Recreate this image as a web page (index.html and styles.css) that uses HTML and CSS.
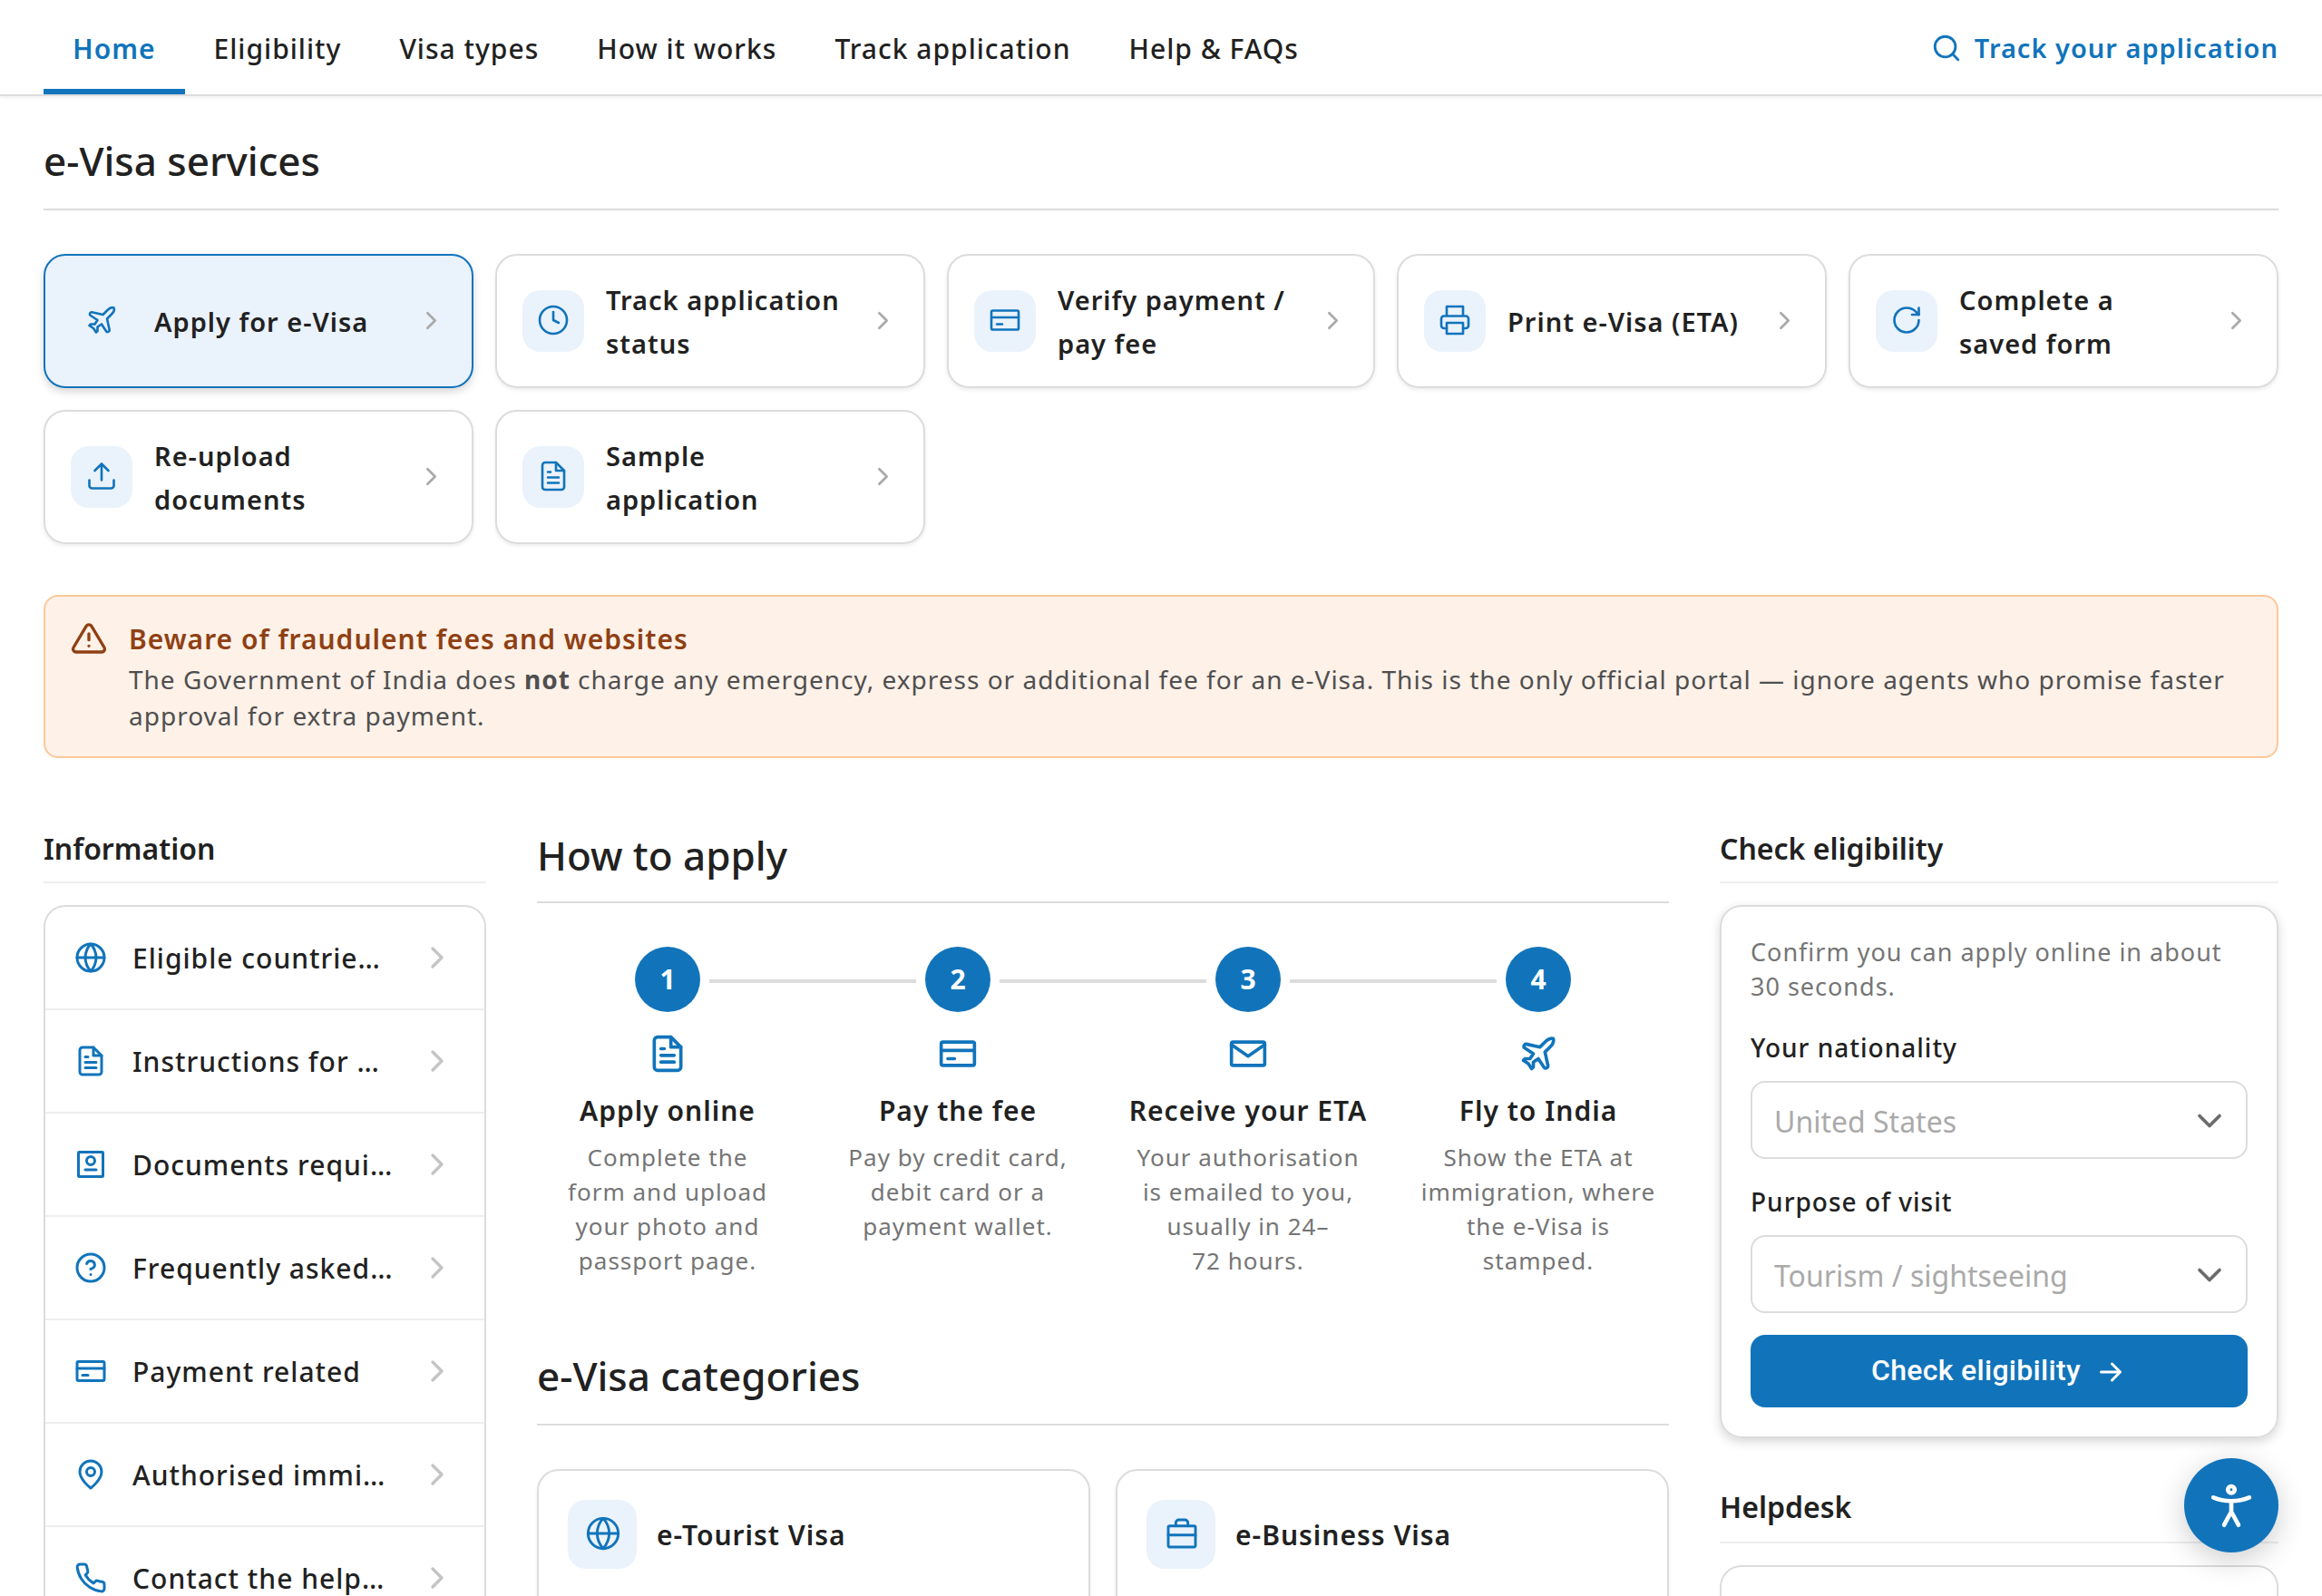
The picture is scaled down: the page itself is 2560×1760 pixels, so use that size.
FILE: index.html
```html
<!DOCTYPE html>
<html lang="en">
<head>
<meta charset="utf-8">
<title>e-Visa services</title>
<link rel="stylesheet" href="styles.css">
</head>
<body>
<svg class="sprite" xmlns="http://www.w3.org/2000/svg">
  <symbol id="plane" viewBox="0 0 24 24"><path d="M17.8 19.2 16 11l3.5-3.5C21 6 21.5 4 21 3c-1-.5-3 0-4.5 1.5L13 8 4.8 6.2c-.5-.1-.9.1-1.1.5l-.3.5c-.2.5-.1 1 .3 1.3L9 12l-2 3H4l-1 1 3 2 2 3 1-1v-3l3-2 3.5 5.3c.3.4.8.5 1.3.3l.5-.2c.4-.3.6-.7.5-1.2z"/></symbol>
  <symbol id="clock" viewBox="0 0 24 24"><circle cx="12" cy="12" r="10"/><path d="M12 6v6l4 2"/></symbol>
  <symbol id="card" viewBox="0 0 24 24"><rect x="2" y="5" width="20" height="14" rx="1"/><path d="M2 10h20M6 15h4"/></symbol>
  <symbol id="printer" viewBox="0 0 24 24"><path d="M6 9V2h12v7M6 18H4a2 2 0 0 1-2-2v-5a2 2 0 0 1 2-2h16a2 2 0 0 1 2 2v5a2 2 0 0 1-2 2h-2"/><path d="M6 14h12v8H6z"/></symbol>
  <symbol id="refresh" viewBox="0 0 24 24"><path d="M21 12a9 9 0 1 1-9-9c2.52 0 4.93 1 6.74 2.74L21 8"/><path d="M21 3v5h-5"/></symbol>
  <symbol id="upload" viewBox="0 0 24 24"><path d="M21 15v4a2 2 0 0 1-2 2H5a2 2 0 0 1-2-2v-4M17 8l-5-5-5 5M12 3v12"/></symbol>
  <symbol id="file" viewBox="0 0 24 24"><path d="M14 2H6a2 2 0 0 0-2 2v16a2 2 0 0 0 2 2h12a2 2 0 0 0 2-2V8z"/><path d="M14 2v6h6M16 13H8M16 17H8M10 9H8"/></symbol>
  <symbol id="alert" viewBox="0 0 24 24"><path d="M10.29 3.86 1.82 18a2 2 0 0 0 1.71 3h16.94a2 2 0 0 0 1.71-3L13.71 3.86a2 2 0 0 0-3.42 0z"/><path d="M12 9v4M12 17h.01"/></symbol>
  <symbol id="globe" viewBox="0 0 24 24"><circle cx="12" cy="12" r="10"/><path d="M2 12h20M12 2a15.3 15.3 0 0 1 4 10 15.3 15.3 0 0 1-4 10 15.3 15.3 0 0 1-4-10 15.3 15.3 0 0 1 4-10z"/></symbol>
  <symbol id="idcard" viewBox="0 0 24 24"><rect x="3" y="3" width="18" height="18" rx=".5"/><circle cx="12" cy="9.3" r="3"/><path d="M8 16h8"/></symbol>
  <symbol id="help" viewBox="0 0 24 24"><circle cx="12" cy="12" r="10"/><path d="M9.09 9a3 3 0 0 1 5.83 1c0 2-3 3-3 3M12 17h.01"/></symbol>
  <symbol id="pin" viewBox="0 0 24 24"><path d="M20 10c0 6-8 12-8 12s-8-6-8-12a8 8 0 0 1 16 0z"/><circle cx="12" cy="10" r="3"/></symbol>
  <symbol id="phone" viewBox="0 0 24 24"><path d="M22 16.92v3a2 2 0 0 1-2.18 2 19.79 19.79 0 0 1-8.63-3.07 19.5 19.5 0 0 1-6-6 19.79 19.79 0 0 1-3.07-8.67A2 2 0 0 1 4.11 2h3a2 2 0 0 1 2 1.72c.13.96.36 1.9.7 2.81a2 2 0 0 1-.45 2.11L8.09 9.91a16 16 0 0 0 6 6l1.27-1.27a2 2 0 0 1 2.11-.45c.91.34 1.85.57 2.81.7A2 2 0 0 1 22 16.92z"/></symbol>
  <symbol id="mail" viewBox="0 0 24 24"><rect x="2" y="5" width="20" height="14" rx="1"/><path d="m2 6.5 10 7 10-7"/></symbol>
  <symbol id="briefcase" viewBox="0 0 24 24"><rect x="3" y="7" width="18" height="14" rx="1"/><path d="M8 7V5a2 2 0 0 1 2-2h4a2 2 0 0 1 2 2v2M3 13h18"/></symbol>
  <symbol id="search" viewBox="0 0 24 24"><circle cx="11" cy="11" r="8"/><path d="m21 21-4.35-4.35"/></symbol>
  <symbol id="chevron" viewBox="0 0 24 24"><path d="m9 6 6 6-6 6"/></symbol>
  <symbol id="down" viewBox="0 0 24 24"><path d="m6 9 6 6 6-6"/></symbol>
  <symbol id="arrow" viewBox="0 0 24 24"><path d="M5 12h14M13 6l6 6-6 6"/></symbol>
  <symbol id="access" viewBox="0 0 24 24"><circle cx="12" cy="4.6" r="1.6"/><path d="M3.5 8.3c5 2.2 12 2.2 17 0M12 10v5M12 15l-3.4 6.3M12 15l3.4 6.3"/></symbol>
</svg>

<header class="nav">
  <nav class="nav-links">
    <a class="nav-link active">Home</a>
    <a class="nav-link">Eligibility</a>
    <a class="nav-link">Visa types</a>
    <a class="nav-link">How it works</a>
    <a class="nav-link">Track application</a>
    <a class="nav-link">Help &amp; FAQs</a>
  </nav>
  <a class="track"><svg class="icon"><use href="#search"/></svg>Track your application</a>
</header>

<main class="page">
  <h2 class="title">e-Visa services</h2>
  <div class="services">
    <a class="service selected"><span class="tile"><svg class="icon"><use href="#plane"/></svg></span><span class="label">Apply for e-Visa</span><svg class="icon chev"><use href="#chevron"/></svg></a>
    <a class="service"><span class="tile"><svg class="icon"><use href="#clock"/></svg></span><span class="label">Track application status</span><svg class="icon chev"><use href="#chevron"/></svg></a>
    <a class="service"><span class="tile"><svg class="icon"><use href="#card"/></svg></span><span class="label">Verify payment / pay fee</span><svg class="icon chev"><use href="#chevron"/></svg></a>
    <a class="service"><span class="tile"><svg class="icon"><use href="#printer"/></svg></span><span class="label">Print e-Visa (ETA)</span><svg class="icon chev"><use href="#chevron"/></svg></a>
    <a class="service"><span class="tile"><svg class="icon"><use href="#refresh"/></svg></span><span class="label">Complete a<br>saved form</span><svg class="icon chev"><use href="#chevron"/></svg></a>
    <a class="service"><span class="tile"><svg class="icon"><use href="#upload"/></svg></span><span class="label">Re-upload documents</span><svg class="icon chev"><use href="#chevron"/></svg></a>
    <a class="service"><span class="tile"><svg class="icon"><use href="#file"/></svg></span><span class="label">Sample application</span><svg class="icon chev"><use href="#chevron"/></svg></a>
  </div>

  <section class="notice">
    <svg class="icon"><use href="#alert"/></svg>
    <div>
      <h3 class="notice-title">Beware of fraudulent fees and websites</h3>
      <p class="notice-text">The Government of India does <b>not</b> charge any emergency, express or additional fee for an e-Visa. This is the only official portal — ignore agents who promise faster approval for extra payment.</p>
    </div>
  </section>

  <div class="columns">
    <aside>
      <h3 class="side-title">Information</h3>
      <div class="menu">
        <a class="menu-row"><svg class="icon"><use href="#globe"/></svg><span class="menu-label">Eligible countries and territories</span><svg class="icon chev"><use href="#chevron"/></svg></a>
        <a class="menu-row"><svg class="icon"><use href="#file"/></svg><span class="menu-label">Instructions for applicants</span><svg class="icon chev"><use href="#chevron"/></svg></a>
        <a class="menu-row"><svg class="icon"><use href="#idcard"/></svg><span class="menu-label">Documents required</span><svg class="icon chev"><use href="#chevron"/></svg></a>
        <a class="menu-row"><svg class="icon"><use href="#help"/></svg><span class="menu-label">Frequently asked questions</span><svg class="icon chev"><use href="#chevron"/></svg></a>
        <a class="menu-row"><svg class="icon"><use href="#card"/></svg><span class="menu-label">Payment related</span><svg class="icon chev"><use href="#chevron"/></svg></a>
        <a class="menu-row"><svg class="icon"><use href="#pin"/></svg><span class="menu-label">Authorised immigration posts</span><svg class="icon chev"><use href="#chevron"/></svg></a>
        <a class="menu-row"><svg class="icon"><use href="#phone"/></svg><span class="menu-label">Contact the helpdesk</span><svg class="icon chev"><use href="#chevron"/></svg></a>
      </div>
    </aside>

    <section>
      <h2 class="title steps-heading">How to apply</h2>
      <div class="steps">
        <div class="step"><span class="num">1</span><svg class="icon"><use href="#file"/></svg><h4 class="step-title">Apply online</h4><p class="step-text">Complete the<br>form and upload<br>your photo and<br>passport page.</p></div>
        <div class="step"><span class="num">2</span><svg class="icon"><use href="#card"/></svg><h4 class="step-title">Pay the fee</h4><p class="step-text">Pay by credit card,<br>debit card or a<br>payment wallet.</p></div>
        <div class="step"><span class="num">3</span><svg class="icon"><use href="#mail"/></svg><h4 class="step-title">Receive your ETA</h4><p class="step-text">Your authorisation<br>is emailed to you,<br>usually in 24–<br>72 hours.</p></div>
        <div class="step"><span class="num">4</span><svg class="icon"><use href="#plane"/></svg><h4 class="step-title">Fly to India</h4><p class="step-text">Show the ETA at<br>immigration, where<br>the e-Visa is<br>stamped.</p></div>
      </div>
      <h2 class="title">e-Visa categories</h2>
      <div class="categories">
        <div class="category"><span class="tile"><svg class="icon"><use href="#globe"/></svg></span><h4 class="category-title">e-Tourist Visa</h4></div>
        <div class="category"><span class="tile"><svg class="icon"><use href="#briefcase"/></svg></span><h4 class="category-title">e-Business Visa</h4></div>
      </div>
    </section>

    <aside>
      <h3 class="side-title">Check eligibility</h3>
      <form class="check">
        <p class="check-text">Confirm you can apply online in about 30 seconds.</p>
        <label class="field-label">Your nationality</label>
        <div class="select">United States<svg class="icon"><use href="#down"/></svg></div>
        <label class="field-label">Purpose of visit</label>
        <div class="select">Tourism / sightseeing<svg class="icon"><use href="#down"/></svg></div>
        <button class="submit" type="button">Check eligibility<svg class="icon"><use href="#arrow"/></svg></button>
      </form>
      <h3 class="side-title helpdesk-title">Helpdesk</h3>
      <div class="helpdesk"></div>
    </aside>
  </div>
</main>

<button class="fab" type="button" aria-label="Accessibility options"><svg class="icon"><use href="#access"/></svg></button>
</body>
</html>
```

FILE: styles.css
```css
* { box-sizing: border-box; margin: 0; padding: 0; }
html, body { height: 1760px; overflow: hidden; }
body {
  background: #fff;
  color: #212121;
  font-family: "Noto Sans", sans-serif;
  font-size: 30px;
  letter-spacing: 1px;
}
.sprite { display: none; }
.icon {
  display: block;
  flex: none;
  width: 36px;
  height: 36px;
  fill: none;
  stroke: #1174bb;
  stroke-width: 2;
  stroke-linecap: round;
  stroke-linejoin: round;
}

.nav {
  display: flex;
  justify-content: space-between;
  height: 106px;
  padding: 0 48px;
  border-bottom: 2px solid #dcdcdc;
  box-shadow: 0 2px 4px rgba(0, 0, 0, .06);
}
.nav-links { display: flex; }
.nav-link {
  padding: 0 32px;
  line-height: 107px;
  font-weight: 500;
  height: 104px;
}
.nav-link.active {
  color: #1174bb;
  font-weight: 600;
  border-bottom: 6px solid #1174bb;
}
.track {
  display: flex;
  align-items: center;
  gap: 14px;
  padding-top: 1px;
  color: #1174bb;
  font-size: 29px;
  font-weight: 600;
}
.track .icon { width: 34px; height: 34px; }

.page { padding: 42px 48px 0; }
.title {
  height: 84px;
  line-height: 58px;
  border-bottom: 2px solid #dcdcdc;
  font-size: 44px;
  font-weight: 500;
  letter-spacing: 0;
}
.services {
  display: grid;
  grid-template-columns: 474px 474px 472px 474px 474px;
  grid-auto-rows: 148px;
  gap: 24px;
  margin-top: 48px;
}
.service {
  display: flex;
  align-items: center;
  gap: 24px;
  padding: 0 28px;
  border: 2px solid #dcdcdc;
  border-radius: 24px;
  box-shadow: 0 2px 4px rgba(0, 0, 0, .08);
}
.service.selected {
  background: #eaf2fc;
  border-color: #1174bb;
  box-shadow: 0 4px 10px rgba(0, 0, 0, .16);
}
.tile {
  display: flex;
  flex: none;
  align-items: center;
  justify-content: center;
  width: 68px;
  height: 68px;
  padding-bottom: 2px;
  border-radius: 20px;
  background: #eaf2fc;
}
.tile .icon { stroke-width: 1.75; }
.label { flex: 1; margin: 2px -12px 0 0; line-height: 48px; font-size: 29px; font-weight: 600; }
.service .chev { width: 33px; height: 33px; stroke: #aaa; margin-bottom: 2px; }

.notice {
  display: flex;
  gap: 24px;
  height: 180px;
  margin-top: 56px;
  padding: 26px 28px;
  border: 2px solid #fdc799;
  border-radius: 16px;
  background: #fef1e8;
}
.notice .icon { width: 40px; height: 40px; stroke: #8f4013; }
.notice-title { line-height: 42px; font-size: 30px; font-weight: 600; color: #8f4013; }
.notice-text { margin-top: 3px; line-height: 40px; font-size: 28px; color: #4f4f4f; }

.columns {
  display: grid;
  grid-template-columns: 488px 1248px 616px;
  gap: 56px;
  margin-top: 78px;
}
.side-title {
  height: 60px;
  line-height: 44px;
  border-bottom: 2px solid #eee;
  font-size: 32px;
  font-weight: 600;
  letter-spacing: 0;
}
.menu {
  margin-top: 24px;
  border: 2px solid #dcdcdc;
  border-radius: 24px;
}
.menu-row {
  display: flex;
  align-items: center;
  height: 114px;
  padding: 0 32px;
  border-bottom: 2px solid #eee;
  font-weight: 500;
}
.menu-label {
  flex: 1;
  min-width: 0;
  margin: 1px 28px 0;
  overflow: hidden;
  white-space: nowrap;
  text-overflow: ellipsis;
}
.menu-row .chev { width: 40px; height: 40px; stroke: #c4c4c4; }

.steps-heading { height: 82px; }
.steps { display: grid; grid-template-columns: repeat(4, 288px); gap: 32px; height: 444px; margin-top: 48px; }
.step { position: relative; display: flex; flex-direction: column; align-items: center; text-align: center; }
.step + .step::before {
  content: "";
  position: absolute;
  top: 36px;
  right: 190px;
  width: 228px;
  height: 4px;
  background: #dcdcdc;
}
.num {
  width: 72px;
  height: 72px;
  border-radius: 50%;
  background: #1174bb;
  color: #fff;
  line-height: 72px;
  font-weight: 700;
  letter-spacing: 0;
}
.step .icon { width: 44px; height: 44px; margin-top: 24px; }
.step-title { margin-top: 17px; line-height: 48px; font-size: 30px; font-weight: 600; }
.step-text { margin-top: 8px; line-height: 38px; font-size: 26px; color: #757575; }

.categories { display: grid; grid-template-columns: 1fr 1fr; gap: 28px; margin-top: 48px; }
.category {
  display: flex;
  align-items: flex-start;
  gap: 22px;
  height: 300px;
  padding: 32px;
  border: 2px solid #dcdcdc;
  border-radius: 24px;
  box-shadow: 0 2px 4px rgba(0, 0, 0, .06);
}
.category .tile { width: 76px; height: 76px; padding-left: 2px; }
.category .icon { width: 40px; height: 40px; }
.category-title { line-height: 78px; font-size: 30px; font-weight: 600; }

.check {
  height: 588px;
  margin-top: 24px;
  padding: 31px 32px;
  border: 2px solid #dcdcdc;
  border-radius: 24px;
  box-shadow: 0 4px 12px rgba(0, 0, 0, .16);
}
.check-text { height: 77px; line-height: 38px; font-size: 27px; color: #757575; }
.field-label { display: block; height: 84px; padding-top: 28px; line-height: 39px; font-size: 28px; font-weight: 500; }
.select {
  display: flex;
  align-items: center;
  justify-content: space-between;
  height: 86px;
  padding: 2px 18px 0 24px;
  border: 2px solid #dcdcdc;
  border-radius: 16px;
  font-size: 32px;
  letter-spacing: 0;
  color: #aaa;
}
.select .icon { width: 44px; height: 44px; stroke: #6b6b6b; }
.submit {
  display: flex;
  align-items: center;
  justify-content: center;
  gap: 15px;
  width: 100%;
  height: 80px;
  margin-top: 24px;
  padding-bottom: 2px;
  border: 0;
  border-radius: 16px;
  background: #1174bb;
  color: #fff;
  font: 500 32px Roboto, sans-serif;
  letter-spacing: .3px;
}
.submit .icon { width: 36px; height: 36px; margin-top: 3px; stroke: #fff; }
.helpdesk-title { margin-top: 56px; line-height: 40px; }
.helpdesk {
  height: 200px;
  margin-top: 24px;
  border: 2px solid #dcdcdc;
  border-radius: 24px;
}

.fab {
  position: fixed;
  right: 48px;
  bottom: 48px;
  display: flex;
  align-items: center;
  justify-content: center;
  width: 104px;
  height: 104px;
  border: 0;
  border-radius: 50%;
  background: #1174bb;
  box-shadow: 0 8px 32px rgba(0, 0, 0, .2);
}
.fab .icon { width: 56px; height: 56px; stroke: #fff; }
```
